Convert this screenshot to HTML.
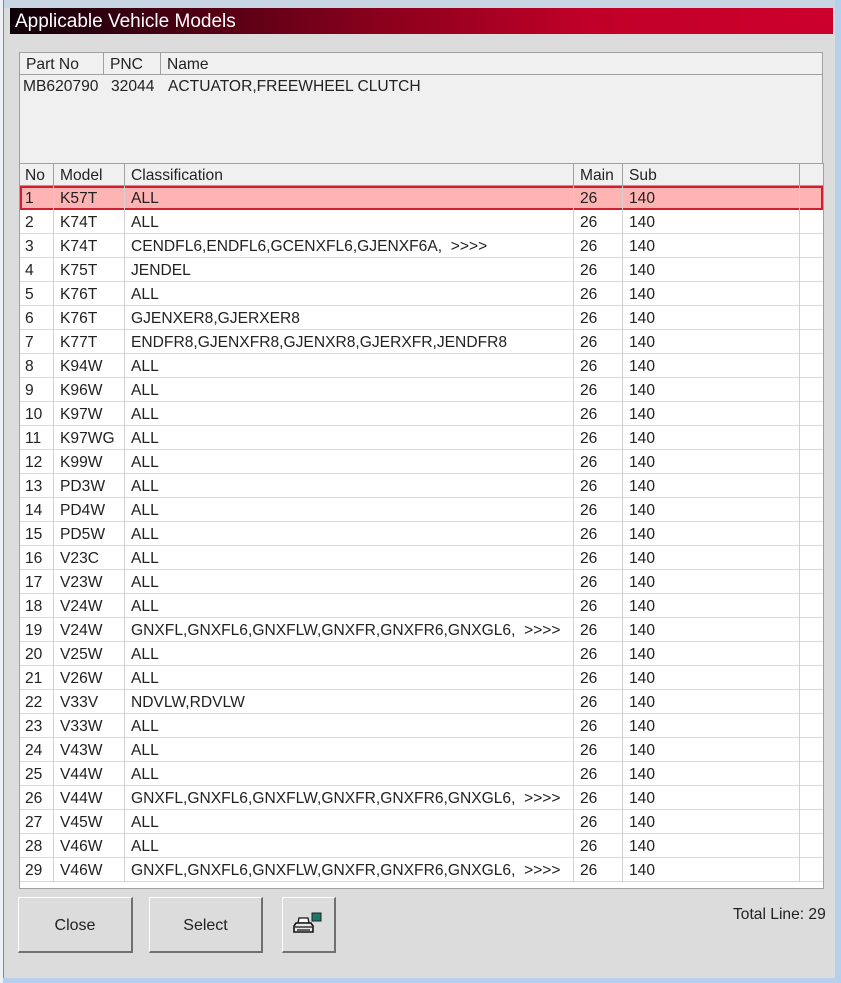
<!DOCTYPE html>
<html><head><meta charset="utf-8"><style>
*{margin:0;padding:0;box-sizing:border-box}
body{width:841px;height:983px;background:#b4d0ec;position:relative;overflow:hidden;font-family:"Liberation Sans",Arial,sans-serif;font-size:15.6px;color:#222}
.win{position:absolute;left:3px;top:0;width:832px;height:978px;background:#dcdcdc;border-left:1px solid #888}
.leftedge{position:absolute;left:0;top:0;width:3px;height:983px;background:#eef2f6}
.frame{position:absolute;left:4px;top:0;width:831px;height:8px;background:#c8d6e4}
.title{position:absolute;left:10px;top:8px;width:823px;height:26px;background:linear-gradient(90deg,#0c0008 0%,#3a0010 15%,#8a001c 45%,#c00028 70%,#cc002c 100%);color:#fff;font-size:19px;line-height:27px;padding-left:5px}
.box{position:absolute;background:#f0f0f0;border:1px solid #a0a0a0}
.hdr{position:absolute;height:22px;line-height:24px;background:#f0f0f0;border-right:1px solid #a0a0a0;border-bottom:1px solid #a0a0a0;padding-left:6px}
.grid{position:absolute;left:19px;top:163px;width:805px;height:726px;background:#fff;border:1px solid #a0a0a0}
.row{position:absolute;left:0;height:24px;width:803px;border-bottom:1px solid #d8d8d8}
.c{position:absolute;top:0;height:24px;line-height:26px;padding-left:6px;border-right:1px solid #d0d0d0;white-space:nowrap;overflow:hidden}
.sel{background:#ffb4b4;outline:2px solid #d02030;outline-offset:-2px}
.btn{position:absolute;top:897px;height:56px;background:#dcdcdc;border-top:1px solid #fff;border-left:1px solid #fff;border-right:2px solid #707070;border-bottom:2px solid #707070;text-align:center;line-height:55px;font-size:16px}
</style></head><body>
<div class="leftedge"></div>
<div class="win"></div>
<div class="frame"></div>
<div class="title">Applicable Vehicle Models</div>
<div class="box" style="left:19px;top:52px;width:804px;height:112px"></div>
<div class="hdr" style="left:20px;top:53px;width:84px">Part No</div>
<div class="hdr" style="left:104px;top:53px;width:57px">PNC</div>
<div class="hdr" style="left:161px;top:53px;width:661px;border-right:none">Name</div>
<div style="position:absolute;left:23px;top:77px;line-height:20px">MB620790</div>
<div style="position:absolute;left:111px;top:77px;line-height:20px">32044</div>
<div style="position:absolute;left:168px;top:77px;line-height:20px">ACTUATOR,FREEWHEEL CLUTCH</div>
<div class="grid" id="g">
<div class="hdr" style="left:0;top:0;width:34px;padding-left:5px">No</div>
<div class="hdr" style="left:34px;top:0;width:71px">Model</div>
<div class="hdr" style="left:105px;top:0;width:449px">Classification</div>
<div class="hdr" style="left:554px;top:0;width:49px">Main</div>
<div class="hdr" style="left:603px;top:0;width:177px">Sub</div>
<div class="hdr" style="left:780px;top:0;width:23px;border-right:none"></div>
</div>
<div class="btn" style="left:18px;width:115px">Close</div>
<div class="btn" style="left:149px;width:114px">Select</div>
<div class="btn" style="left:282px;width:54px">
<svg width="34" height="26" viewBox="0 0 34 26" style="position:absolute;left:8px;top:14px">
<rect x="21" y="1" width="9" height="8" fill="#1a7a6a" stroke="#222"/>
<path d="M8 6h9l1 5H7z" fill="#fff" stroke="#111" stroke-width="1.3"/>
<path d="M5 11h15l2 3v6H3v-6z" fill="#e8e8e8" stroke="#111" stroke-width="1.6"/>
<path d="M4 15h17M6 18h13" stroke="#111" stroke-width="1.2"/>
</svg></div>
<div style="position:absolute;left:733px;top:906px">Total Line: 29</div>
<script>
var d=[["1","K57T","ALL"],["2","K74T","ALL"],["3","K74T","CENDFL6,ENDFL6,GCENXFL6,GJENXF6A,&nbsp; &gt;&gt;&gt;&gt;"],["4","K75T","JENDEL"],["5","K76T","ALL"],["6","K76T","GJENXER8,GJERXER8"],["7","K77T","ENDFR8,GJENXFR8,GJENXR8,GJERXFR,JENDFR8"],["8","K94W","ALL"],["9","K96W","ALL"],["10","K97W","ALL"],["11","K97WG","ALL"],["12","K99W","ALL"],["13","PD3W","ALL"],["14","PD4W","ALL"],["15","PD5W","ALL"],["16","V23C","ALL"],["17","V23W","ALL"],["18","V24W","ALL"],["19","V24W","GNXFL,GNXFL6,GNXFLW,GNXFR,GNXFR6,GNXGL6,&nbsp; &gt;&gt;&gt;&gt;"],["20","V25W","ALL"],["21","V26W","ALL"],["22","V33V","NDVLW,RDVLW"],["23","V33W","ALL"],["24","V43W","ALL"],["25","V44W","ALL"],["26","V44W","GNXFL,GNXFL6,GNXFLW,GNXFR,GNXFR6,GNXGL6,&nbsp; &gt;&gt;&gt;&gt;"],["27","V45W","ALL"],["28","V46W","ALL"],["29","V46W","GNXFL,GNXFL6,GNXFLW,GNXFR,GNXFR6,GNXGL6,&nbsp; &gt;&gt;&gt;&gt;"]];
var h="";
d.forEach(function(r,i){h+='<div class="row'+(i==0?' sel':'')+'" style="top:'+(22+i*24)+'px">'+
'<div class="c" style="left:0;width:34px;padding-left:5px">'+r[0]+'</div>'+
'<div class="c" style="left:34px;width:71px">'+r[1]+'</div>'+
'<div class="c" style="left:105px;width:449px">'+r[2]+'</div>'+
'<div class="c" style="left:554px;width:49px">26</div>'+
'<div class="c" style="left:603px;width:177px">140</div></div>';});
document.getElementById("g").insertAdjacentHTML("beforeend",h);
</script>
</body></html>
